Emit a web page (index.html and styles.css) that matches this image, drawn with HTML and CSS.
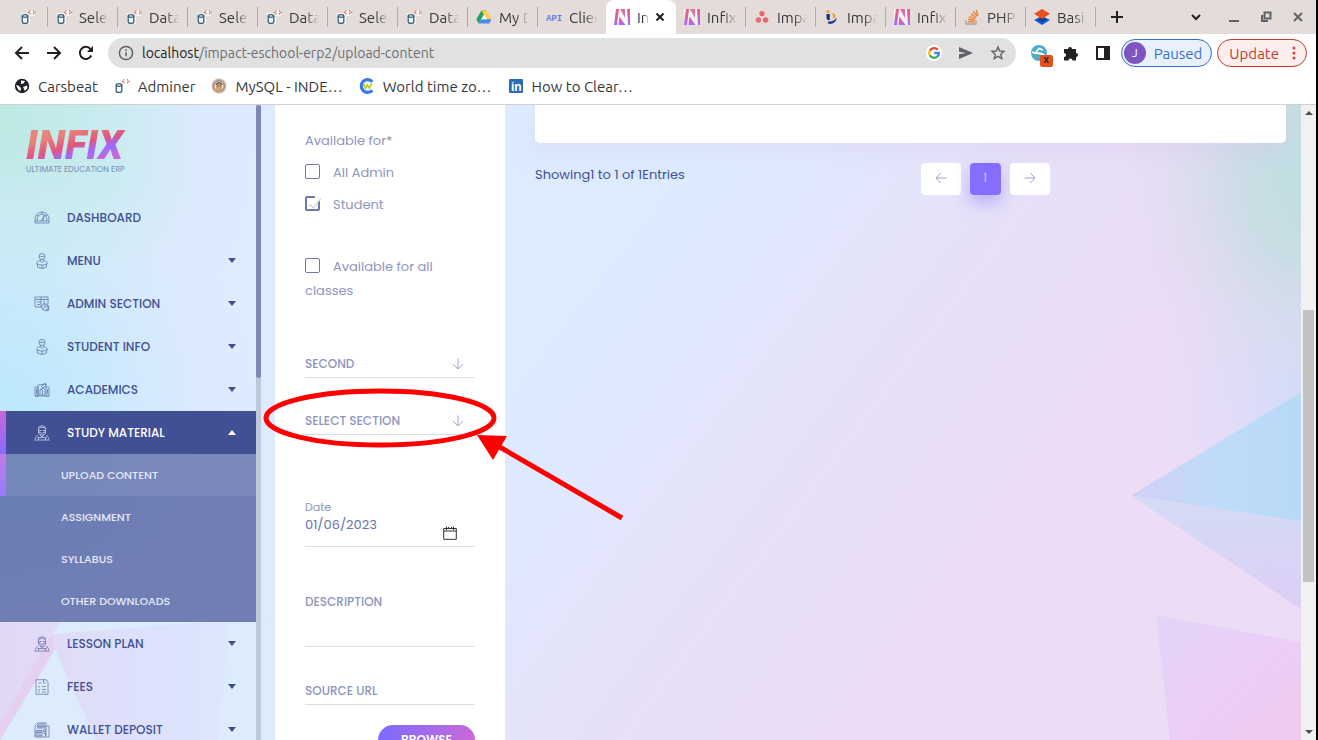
FILE: index.html
```html
<!DOCTYPE html>
<html lang="en">
<head>
<meta charset="utf-8">
<title>Infix - Upload Content</title>
<link rel="stylesheet" href="styles.css">
</head>
<body>
<svg class="defs" aria-hidden="true">
  <defs>
    <linearGradient id="infix" x1="0" y1="0" x2="0" y2="1"><stop offset="0.3" stop-color="#e2608f"/><stop offset="1" stop-color="#a46bff"/></linearGradient>
    <symbol id="i-adminer" viewBox="0 0 16 16"><path d="M1 4h7V1h7v6h-5v8H1z" fill="#fff" opacity=".7"/><g fill="none" stroke="#2f5f7d" stroke-width="1.3"><ellipse cx="5" cy="7" rx="2.800" ry="1.300"/><path d="M2.200 7v6c0 1.800 5.600 1.800 5.600 0V7"/></g><path d="M10.300 1.500L8.600 3.300l1.700 1.800M13.200 1.500L15 3.300l-1.800 1.800" fill="none" stroke="#c0543c" stroke-width="1.200" stroke-dasharray="1.300 .6"/></symbol>
    <symbol id="i-drive" viewBox="0 0 16 16"><path d="M5.500 1.500h5l-7.800 13L.3 10.300z" fill="#1fa463"/><path d="M5.500 1.500h5l5.200 8.800h-5z" fill="#ffcf48"/><path d="M5.300 10.300h10.400l-2.500 4.200H2.700z" fill="#4688f4"/><path d="M8 5.700l2.700 4.600H5.300z" fill="#fff"/></symbol>
    <symbol id="i-n" viewBox="0 0 16 16"><path d="M0 0h16v16H0z" fill="#fff" opacity=".6"/><g fill="url(#infix)"><path d="M2 0h3L3 16H0z"/><path d="M6 0h5v9z" opacity=".9"/><path d="M5.300 7.500L11.500 16H4.500z"/><path d="M13 0h3v16h-2z"/></g></symbol>
    <symbol id="i-dots" viewBox="0 0 16 16"><g fill="#e9686f"><circle cx="8" cy="4.600" r="2.700"/><circle cx="4.400" cy="11" r="2.700"/><circle cx="11.600" cy="11" r="2.700"/></g></symbol>
    <symbol id="i-b" viewBox="0 0 16 16"><circle cx="4" cy="2.600" r="1.600" fill="#f3a02a"/><path d="M2.500 5h3.300v6c-2 .5-3.300-.5-3.300-2z" fill="#1d2f7c"/><path d="M7 4c5 0 6.500 4 1 6.500 2-2.500 1.500-4.500-1-6.500z" fill="#f3a02a"/><path d="M4 12.500c3.500.5 7-1 8.500-4 .5 4.500-4.500 7.500-8.500 6z" fill="#213b92"/></symbol>
    <symbol id="i-so" viewBox="0 0 16 16"><path d="M2 11v4h10v-4" fill="none" stroke="#a7a2a0" stroke-width="1.300"/><g stroke="#ef8236" stroke-width="1.400"><path d="M4 12.800h6.500M4.200 10.300l6.500.7M5 7.600l6.200 2M6.800 4.900l5.200 3.600M9.200 2.500l3.800 4.800M12.200 1l1.600 5.800"/></g></symbol>
    <symbol id="i-layers" viewBox="0 0 16 16"><path d="M8 7l8 4-8 5-8-5z" fill="#0d5fd8"/><path d="M8 8l5 2.500L8 13l-5-2.500z" fill="#1b3b8d"/><path d="M8 0l8 4.700L8 10 0 4.700z" fill="#e9501f"/></symbol>
    <symbol id="i-globe" viewBox="0 0 16 16"><circle cx="8" cy="8" r="7.200" fill="#202124"/><path d="M2 7l2.500.8L7 10l-.5 3-2-1zM7 2.500l4 .5-1.500 2.500L7 6zM9 9l4-1.500.5 2.500-2.500 3z" fill="#fff"/></symbol>
    <symbol id="i-owl" viewBox="0 0 16 16"><circle cx="8" cy="8" r="7.500" fill="#cdb49e"/><circle cx="8" cy="8" r="5.200" fill="#efe3d5" stroke="#8a7970"/><ellipse cx="8" cy="9.500" rx="3" ry="4" fill="#d7a06a"/><path d="M5 7c1-3 5-3 6 0" fill="none" stroke="#62564f" stroke-width="1.500"/><path d="M6.500 8h.9M8.800 8h.9" stroke="#333" stroke-width="1.200"/></symbol>
    <symbol id="i-clock" viewBox="0 0 16 16"><path d="M13.300 3.800A6.300 6.300 0 1 0 13.300 12.200" fill="none" stroke="#3b78e7" stroke-width="3.200"/><path d="M4.500 6l2 4L8.300 7l2 3 2.500-4.500" fill="none" stroke="#b5d334" stroke-width="1.900"/></symbol>
    <symbol id="i-dash" viewBox="0 0 16 16"><path d="M1 13V9a7 7 0 0 1 14 0v4zM1 11h14M3.200 11V9a4.800 4.800 0 0 1 9.600 0v2M7 11l3.500-6-1.700 6M8 2v2M3 5l1.500 1M13 5l-1.500 1"/></symbol>
    <symbol id="i-person" viewBox="0 0 16 16"><circle cx="8" cy="3.500" r="3"/><path d="M5.200 3c2 .8 4 .8 5.600 0M6.500 6.300V8L8 9.500 9.500 8V6.300M6 7.700c-2.300.3-3.300 1.500-3.300 3.300L8 12.200l5.300-1.200c0-1.800-1-3-3.300-3.300M3.500 11.300V14L8 15.500l4.500-1.500v-2.700M8 12v3.500"/></symbol>
    <symbol id="i-admin" viewBox="0 0 16 16"><path d="M1 1h13v7M1 1v10h7M1 3.500h13M3 6h4M3 8.500h3M7 1v10M10 3.500V8"/><circle cx="11" cy="11" r="3.300"/><path d="M11 8v3l3-1M11 11l-2 2M14 9l1 5-3 1"/></symbol>
    <symbol id="i-acad" viewBox="0 0 16 16"><path d="M1 14V5h3v9zM4 13V3l8-1v11zM12 5h3v9h-3M1 14h14M6 12V8l3-3 2 3v4M7 5l4-4 1 2-5 5M2.500 7v5M13.500 7v5M8.500 8v5"/></symbol>
    <symbol id="i-study" viewBox="0 0 16 16"><circle cx="8" cy="4.500" r="3.800"/><path d="M4.500 3.500c2.500-1.500 5-1.500 7 0M5 5.500h2.500M8.700 5.500H11M4.500 5v3.500c2 2 5 2 7 0V5M6 10l2 2 2-2M4 10.500c-2 .5-2.500 1.500-2.500 3.500M12 10.500c2 .5 2.500 1.500 2.500 3.500M0 15h16M3.500 12.500h9M4.500 12.500V15M11.500 12.500V15"/></symbol>
    <symbol id="i-fees" viewBox="0 0 16 16"><path d="M2 .7h10L14 3v12.300H2zM4.500 4h3M4 7.500l.8.8L6 6.800M8 7.500h4M4 10.500l.8.800L6 9.800M8 10.500h4M4 13h2M8 13h4M9.500.7V4H12"/></symbol>
    <symbol id="i-wallet" viewBox="0 0 16 16"><path d="M1 15V4l3-3h8v14zM3 4h9M3 6h9M4 2v4M6 1v5M8 1v5M10 1v5M12.500 4H15v11h-2.500M2 8.500h6V14H2zM9.500 8h2v2h-2zM9.500 11.500h2V14M2 10.500h6M4 8.500V14M6 8.500V14"/></symbol>
    <symbol id="i-down" viewBox="0 0 12 12"><path d="M6 .5V11M1 6.200L6 11l5-4.800"/></symbol>
  </defs>
</svg>

<header class="browser">
  <nav class="tabs" aria-label="Open tabs">
    <div class="tab pinned"><button aria-label="Adminer"><svg><use href="#i-adminer"/></svg></button></div>
    <div class="tab"><button><svg><use href="#i-adminer"/></svg><span>Selec</span></button></div>
    <div class="tab"><button><svg><use href="#i-adminer"/></svg><span>Data</span></button></div>
    <div class="tab"><button><svg><use href="#i-adminer"/></svg><span>Selec</span></button></div>
    <div class="tab"><button><svg><use href="#i-adminer"/></svg><span>Data</span></button></div>
    <div class="tab"><button><svg><use href="#i-adminer"/></svg><span>Selec</span></button></div>
    <div class="tab"><button><svg><use href="#i-adminer"/></svg><span>Data</span></button></div>
    <div class="tab"><button><svg><use href="#i-drive"/></svg><span>My D</span></button></div>
    <div class="tab bare"><button><svg viewBox="0 0 16 16"><text class="api-mark" x="0" y="12">API</text></svg><span>Clien</span></button></div>
    <div class="tab active"><button><svg><use href="#i-n"/></svg><span>In</span></button><button class="close" aria-label="Close tab"><svg viewBox="0 0 10 10"><path d="M1.500 1.500l7 7M8.500 1.500l-7 7"/></svg></button></div>
    <div class="tab"><button><svg><use href="#i-n"/></svg><span>Infix</span></button></div>
    <div class="tab"><button><svg><use href="#i-dots"/></svg><span>Impa</span></button></div>
    <div class="tab"><button><svg><use href="#i-b"/></svg><span>Impa</span></button></div>
    <div class="tab"><button><svg><use href="#i-n"/></svg><span>Infix</span></button></div>
    <div class="tab"><button><svg><use href="#i-so"/></svg><span>PHP</span></button></div>
    <div class="tab"><button><svg><use href="#i-layers"/></svg><span>Basi</span></button></div>
    <button class="new-tab" aria-label="New tab"><svg viewBox="0 0 14 14"><path d="M7 1v12M1 7h12"/></svg></button>
    <div class="window-controls">
      <button aria-label="Search tabs"><svg viewBox="0 0 12 12"><path class="dark" d="M2 4l4 4 4-4"/></svg></button>
      <button aria-label="Minimize"><svg viewBox="0 0 12 12"><path d="M1 10h10"/></svg></button>
      <button aria-label="Restore"><svg viewBox="0 0 12 12"><path d="M4.500 1.500h6v6h-6zM2 4v6h6"/></svg></button>
      <button aria-label="Close"><svg viewBox="0 0 12 12"><path d="M2 2l8 8M10 2l-8 8"/></svg></button>
    </div>
  </nav>
  <div class="toolbar">
    <div class="nav-buttons">
      <button aria-label="Back"><svg viewBox="0 0 16 16"><path d="M15 8H2M8 2L2 8l6 6"/></svg></button>
      <button aria-label="Forward"><svg viewBox="0 0 16 16"><path d="M1 8h13M8 2l6 6-6 6"/></svg></button>
      <button aria-label="Reload"><svg viewBox="0 0 16 16"><path d="M13.300 10.500A6 6 0 1 1 12.500 4"/><path class="solid" d="M15 1v6H9z"/></svg></button>
    </div>
    <div class="address">
      <svg class="info" viewBox="0 0 16 16"><circle cx="8" cy="8" r="6.600"/><path d="M8 7.300v4M8 4.300v1.700"/></svg>
      <span class="url"><b>localhost</b>/impact-eschool-erp2/upload-content</span>
      <button aria-label="Google"><svg viewBox="0 0 16 16"><circle cx="8" cy="8" r="8" fill="#fff"/><g fill="none" stroke-width="2.300"><path d="M11.700 4.800A4.900 4.900 0 0 0 3.800 5.700" stroke="#ea4335"/><path d="M3.800 5.700a4.900 4.900 0 0 0 0 4.600" stroke="#fbbc05"/><path d="M3.800 10.300a4.900 4.900 0 0 0 7.400 1.400" stroke="#34a853"/><path d="M11.200 11.700A4.900 4.900 0 0 0 12.900 8H8.200" stroke="#4285f4"/></g></svg></button>
      <button aria-label="Share"><svg viewBox="0 0 16 16"><path d="M1 2l14 6-14 6V9.200L8 8 1 6.800z" fill="#5f6368"/></svg></button>
      <button aria-label="Bookmark"><svg viewBox="0 0 16 16"><path d="M8 2l1.700 4 4.300.4-3.200 2.900 1 4.300L8 11.300l-3.800 2.300 1-4.300L2 6.400 6.300 6z" fill="none" stroke="#5f6368" stroke-width="1.400"/></svg></button>
    </div>
    <div class="extensions">
      <button class="blocked" aria-label="Translate extension"><svg viewBox="0 0 16 16"><circle cx="8" cy="8" r="8" fill="#4eacc9"/><path d="M1 7c5 3 8-1 13 4M5 7L8 3.500 12 5" fill="none" stroke="#fff" stroke-width="1.800"/></svg><span>x</span></button>
      <button aria-label="Extensions"><svg viewBox="0 0 16 16"><path d="M1 4h4a2 2 0 1 1 4 0h4v4a2 2 0 1 1 0 4v3.500H9.500a2 2 0 1 0-4 0H1V12a2 2 0 1 0 0-4z" fill="#202124"/></svg></button>
      <button aria-label="Side panel"><svg viewBox="0 0 16 16"><path d="M1 1h14v14H1zM3 3v10h6V3z" fill="#202124" fill-rule="evenodd"/></svg></button>
    </div>
    <button class="pill paused"><span class="avatar">J</span>Paused</button>
    <button class="pill update">Update<svg viewBox="0 0 4 16"><circle cx="2" cy="3" r="1.500"/><circle cx="2" cy="8" r="1.500"/><circle cx="2" cy="13" r="1.500"/></svg></button>
  </div>
  <nav class="bookmarks" aria-label="Bookmarks">
    <a href="#"><svg><use href="#i-globe"/></svg>Carsbeat</a>
    <a href="#"><svg><use href="#i-adminer"/></svg>Adminer</a>
    <a href="#"><svg><use href="#i-owl"/></svg>MySQL - INDE…</a>
    <a href="#"><svg><use href="#i-clock"/></svg>World time zo…</a>
    <a href="#"><svg viewBox="0 0 16 16"><rect x="1" y="1" width="14" height="14" rx="1" fill="#2a6fb5"/><text class="in-mark" x="3" y="13">in</text></svg>How to Clear…</a>
  </nav>
</header>

<div class="page">
  <svg class="backdrop" viewBox="0 0 1316 636" preserveAspectRatio="none" aria-hidden="true">
    <defs>
      <linearGradient id="base" gradientUnits="userSpaceOnUse" x1="590" y1="190" x2="960" y2="470"><stop offset="0" stop-color="#dcebfe"/><stop offset=".25" stop-color="#e1e8fe"/><stop offset=".55" stop-color="#e6e1f8"/><stop offset="1" stop-color="#ecdcf6"/></linearGradient>
      <radialGradient id="teal" gradientUnits="userSpaceOnUse" cx="0" cy="0" r="1" gradientTransform="translate(1320 70) scale(200 250)"><stop offset="0" stop-color="#bbdfe1"/><stop offset=".4" stop-color="#c8dde4" stop-opacity=".9"/><stop offset="1" stop-color="#dedcee" stop-opacity="0"/></radialGradient>
      <radialGradient id="blue" gradientUnits="userSpaceOnUse" cx="0" cy="0" r="1" gradientTransform="translate(1310 290) scale(150 180)"><stop offset="0" stop-color="#cddcfb"/><stop offset="1" stop-color="#dcdcf9" stop-opacity="0"/></radialGradient>
      <radialGradient id="mint" gradientUnits="userSpaceOnUse" cx="0" cy="0" r="1" gradientTransform="translate(0 20) scale(250 300)"><stop offset="0" stop-color="#bce9e4"/><stop offset=".5" stop-color="#c6ecef" stop-opacity=".8"/><stop offset="1" stop-color="#dceafe" stop-opacity="0"/></radialGradient>
      <radialGradient id="sky" gradientUnits="userSpaceOnUse" cx="0" cy="0" r="1" gradientTransform="translate(0 300) scale(250 250)"><stop offset="0" stop-color="#bbe8fb"/><stop offset=".4" stop-color="#c4e9fc" stop-opacity=".8"/><stop offset="1" stop-color="#dceafe" stop-opacity="0"/></radialGradient>
      <linearGradient id="shard"><stop offset="0" stop-color="#d2d0f7"/><stop offset=".55" stop-color="#bedcf8"/><stop offset="1" stop-color="#b8d9f6"/></linearGradient>
      <linearGradient id="shard2" x1="0" y1="0" x2="0" y2="1"><stop offset="0" stop-color="#d4dbf7"/><stop offset="1" stop-color="#dccff4"/></linearGradient>
      <linearGradient id="rose" x1="0" y1="0" x2="1" y2="1"><stop offset="0" stop-color="#e2d5f6"/><stop offset=".5" stop-color="#ebcef6"/><stop offset="1" stop-color="#f0caef"/></linearGradient>
      <linearGradient id="wash" x1="0" y1="0" x2="1" y2="0"><stop offset="0" stop-color="#e2d8f5"/><stop offset=".6" stop-color="#dde3fd"/><stop offset="1" stop-color="#dceafd"/></linearGradient>
    </defs>
    <rect width="1316" height="636" fill="url(#base)"/>
    <rect x="1100" width="216" height="636" fill="url(#blue)"/>
    <rect x="1100" width="216" height="400" fill="url(#teal)"/>
    <path d="M1131 391L1301 288V417z" fill="url(#shard)"/>
    <path d="M1131 391l170 26v88z" fill="url(#shard2)"/>
    <path d="M1156 511l145 27v98h-131z" fill="url(#rose)"/>
    <rect width="275" height="636" fill="#deeafe"/>
    <rect width="260" height="400" fill="url(#mint)"/>
    <rect width="260" height="560" fill="url(#sky)"/>
    <path d="M0 518h275v118H0z" fill="url(#wash)"/>
    <path d="M52 530l150-12H60zM55 545L0 636h96zM230 518l-12 118h57V518z" fill="#dcecfc"/>
    <path d="M52 530l3 15L0 636v-16z" fill="#e5d0ef"/>
  </svg>

  <aside class="sidebar">
    <div class="side-content">
      <a class="logo" href="#"><strong>INFIX</strong><small>ULTIMATE EDUCATION ERP</small></a>
      <ul class="menu">
        <li><a href="#"><svg><use href="#i-dash"/></svg>DASHBOARD</a></li>
        <li><a class="has-sub" href="#"><svg><use href="#i-person"/></svg>MENU</a></li>
        <li><a class="has-sub" href="#"><svg><use href="#i-admin"/></svg>ADMIN SECTION</a></li>
        <li><a class="has-sub" href="#"><svg><use href="#i-person"/></svg>STUDENT INFO</a></li>
        <li><a class="has-sub" href="#"><svg><use href="#i-acad"/></svg>ACADEMICS</a></li>
        <li>
          <a class="has-sub open" href="#"><svg><use href="#i-study"/></svg>STUDY MATERIAL</a>
          <ul class="submenu">
            <li><a class="current" href="#">UPLOAD CONTENT</a></li>
            <li><a href="#">ASSIGNMENT</a></li>
            <li><a href="#">SYLLABUS</a></li>
            <li><a href="#">OTHER DOWNLOADS</a></li>
          </ul>
        </li>
        <li><a class="has-sub" href="#"><svg><use href="#i-study"/></svg>LESSON PLAN</a></li>
        <li><a class="has-sub" href="#"><svg><use href="#i-fees"/></svg>FEES</a></li>
        <li><a class="has-sub" href="#"><svg><use href="#i-wallet"/></svg>WALLET DEPOSIT</a></li>
      </ul>
    </div>
    <div class="side-scroll"><i></i></div>
  </aside>

  <main class="content">
    <form class="card upload-form">
      <fieldset>
        <legend>Available for*</legend>
        <label><input type="checkbox">All Admin</label>
        <label><input type="checkbox" checked>Student</label>
      </fieldset>
      <label class="all-classes"><input type="checkbox">Available for all classes</label>
      <div class="select"><select aria-label="Class"><option>SECOND</option></select><svg><use href="#i-down"/></svg></div>
      <div class="select"><select aria-label="Section"><option>SELECT SECTION</option></select><svg><use href="#i-down"/></svg></div>
      <div class="date">
        <div class="date-field"><label for="date">Date</label><input id="date" type="text" value="01/06/2023"></div>
        <button type="button" aria-label="Open calendar"><svg viewBox="0 0 14 14"><path d="M.7 2.500h12.600v10.800H.7zM.7 5h12.600M3.500.5v3.500M10.500.5v3.500M5.500 1v2M8.500 1v2"/></svg></button>
      </div>
      <textarea class="description" aria-label="Description" placeholder="DESCRIPTION"></textarea>
      <input class="source" type="text" aria-label="Source URL" placeholder="SOURCE URL">
      <button class="browse" type="button">BROWSE</button>
    </form>
    <section class="listing">
      <div class="card table-card"></div>
      <div class="table-footer">
        <p>Showing1 to 1 of 1Entries</p>
        <nav class="pager" aria-label="Pages">
          <button aria-label="Previous"><svg class="left"><use href="#i-down"/></svg></button>
          <button class="on">1</button>
          <button aria-label="Next"><svg class="right"><use href="#i-down"/></svg></button>
        </nav>
      </div>
    </section>
  </main>

  <div class="page-scroll"><i class="up"></i><i class="thumb"></i><i class="down"></i></div>

  <svg class="annotation" viewBox="0 0 362 136" aria-hidden="true"><ellipse cx="118" cy="31" rx="114" ry="27" fill="none" stroke="#f00" stroke-width="5"/><path d="M236 59l124 72" stroke="#f00" stroke-width="5"/><path d="M215 48l30 1-14 24z" fill="#f00"/></svg>
</div>
</body>
</html>
```

FILE: styles.css
```css
* { box-sizing: border-box; }

body {
  margin: 0;
  height: 100vh;
  display: flex;
  flex-direction: column;
  overflow: hidden;
  border-right: 2px solid #000;
  font-family: "Poppins", "Inter", sans-serif;
  font-size: 13px;
  color: #415094;
}

button { border: 0; padding: 0; background: none; font: inherit; color: inherit; }
a { color: inherit; text-decoration: none; }
ul { list-style: none; margin: 0; padding: 0; }
svg { display: block; flex: none; width: 16px; height: 16px; }
.defs { position: absolute; width: 0; height: 0; }

/* Browser frame */
.browser {
  background: #fff;
  border-bottom: 1px solid #cfd0d3;
  font-family: "Ubuntu", "Noto Sans", sans-serif;
  font-size: 15px;
  color: #35363a;
}

.tabs { display: flex; align-items: center; height: 34px; background: #e4dcd8; }
.tab {
  display: flex;
  align-items: center;
  flex: 0 1 70px;
  min-width: 0;
  height: 20px;
  padding: 0 8px;
  border-right: 1px solid #b0a9a7;
}
.tab.pinned { flex-basis: 48px; padding-left: 20px; }
.tab.bare { flex-basis: 68px; border-color: transparent; }
.tab button { display: flex; align-items: center; gap: 7px; min-width: 0; flex: 1; }
.tab span {
  flex: 1;
  overflow: hidden;
  white-space: nowrap;
  text-align: left;
  -webkit-mask-image: linear-gradient(90deg, #000 55%, transparent);
  mask-image: linear-gradient(90deg, #000 55%, transparent);
}
.tab.active {
  height: 34px;
  padding-right: 11px;
  background: #fff;
  border: 0;
  border-radius: 8px 8px 0 0;
}
.tab .close { flex: none; margin-left: 6px; }
.close svg { width: 10px; height: 10px; stroke: #202124; stroke-width: 2; }
.api-mark { font: bold 9px "Liberation Mono", monospace; fill: #5a86e8; }
.in-mark { font: bold 12px "Liberation Sans", sans-serif; fill: #fff; }
.new-tab { margin-left: 14px; }
.new-tab svg { width: 14px; height: 14px; stroke: #202124; stroke-width: 2; }
.window-controls { display: flex; gap: 20px; margin-left: auto; padding-right: 12px; }
.window-controls svg { width: 12px; height: 12px; fill: none; stroke: #5f6368; stroke-width: 2; }
.window-controls .dark { stroke: #202124; }
.window-controls button:first-child { margin-right: 6px; }

.toolbar { display: flex; align-items: center; height: 38px; padding: 0 9px 0 14px; }
.nav-buttons { display: flex; gap: 16px; margin-right: 14px; }
.nav-buttons svg { fill: none; stroke: #202124; stroke-width: 2; }
.nav-buttons .solid { fill: #202124; stroke: none; }
.address {
  display: flex;
  align-items: center;
  gap: 16px;
  flex: 1;
  height: 30px;
  padding: 0 10px;
  border-radius: 15px;
  background: #e1e1e1;
}
.address .info { margin-right: -8px; fill: none; stroke: #5f6368; stroke-width: 1.5; }
.url { flex: 1; font-size: 14px; color: #6b6e72; }
.url b { font-weight: 400; color: #202124; }
.extensions { display: flex; gap: 16px; margin: 0 10px 0 15px; }
.blocked { position: relative; }
.blocked span {
  position: absolute;
  left: 9px;
  top: 10px;
  width: 13px;
  height: 12px;
  border-radius: 2px;
  background: #e2501c;
  color: #202124;
  font-size: 10px;
  font-weight: 700;
  line-height: 10px;
}
.pill { display: flex; align-items: center; height: 28px; border: 1px solid; border-radius: 14px; }
.paused { gap: 8px; padding: 0 9px 0 2px; margin-right: 5px; background: #e8f0fc; color: #3570ca; }
.avatar { width: 22px; height: 22px; border-radius: 50%; background: #7e55c0; color: #fff; font-size: 12px; line-height: 22px; }
.update { gap: 13px; padding: 0 10px 0 11px; background: #fceeec; color: #c03b31; }
.update svg { width: 4px; height: 16px; fill: #c5473d; }

.bookmarks { display: flex; gap: 16px; height: 32px; padding: 0 14px 4px; }
.bookmarks a { display: flex; align-items: center; gap: 8px; }

/* Page */
.page { position: relative; display: flex; flex: 1; min-height: 0; overflow: hidden; }
.backdrop { position: absolute; z-index: -1; width: 100%; height: 100%; }

.sidebar { display: flex; flex: none; width: 261px; }
.side-content { flex: 1; overflow: hidden; font-size: 12px; font-weight: 500; }
.logo { display: block; height: 91px; padding: 21px 0 0 26px; }
.logo strong {
  display: block;
  width: 104px;
  font: italic 900 40px/40px "Roboto", sans-serif;
  background: linear-gradient(165deg, #e8857a 25%, #e2557f 48%, #9b6bff 62%, #c868d8 78%);
  -webkit-background-clip: text;
  background-clip: text;
  color: transparent;
}
.logo small { display: block; font-size: 8px; font-weight: 400; line-height: 8px; color: #7b8db5; }

.menu a { display: flex; align-items: center; height: 43px; padding: 0 20px 0 34px; gap: 17px; }
.menu svg { fill: none; stroke: currentColor; stroke-width: .8; opacity: .75; }
.has-sub::after {
  content: "";
  margin-left: auto;
  border: 4px solid transparent;
  border-top: 5px solid #415094;
  border-bottom: 0;
}
.menu .open { position: relative; background: #415094; color: #fff; }
.menu .open::after { border-top: 0; border-bottom: 5px solid #fff; }
.open::before, .current::before {
  content: "";
  position: absolute;
  inset: 0 auto 0 0;
  width: 6px;
  background: linear-gradient(#c766d8, #8a6cff);
}
.submenu { background: rgba(65, 80, 148, .7); }
.submenu a { position: relative; height: 42px; padding-left: 61px; font-size: 11px; color: #e7e9f8; }
.submenu .current { background: rgba(255, 255, 255, .08); }
.submenu .current::before { background: linear-gradient(#c07be6, #987bff); }
.side-scroll { width: 5px; background: #bdc8d8; }
.side-scroll i { display: block; height: 43%; border-radius: 3px; background: #7e87b2; }

.content { display: flex; gap: 30px; flex: 1; min-width: 0; padding: 0 15px 0 14px; }
.card { background: #fff; }
.upload-form {
  display: flex;
  flex-direction: column;
  flex: none;
  width: 230px;
  padding: 24px 30px 0;
  overflow: hidden;
  color: #8e95bc;
  line-height: 24px;
}
.upload-form > * { flex: none; }
fieldset { display: flex; flex-direction: column; gap: 8px; margin: 0; padding: 0; border: 0; }
legend { padding: 0; margin-bottom: 8px; }
input[type="checkbox"] {
  appearance: none;
  position: relative;
  width: 15px;
  height: 15px;
  margin: 0 13px 0 0;
  border: 1px solid #6e78ab;
  border-radius: 2px;
  vertical-align: -2px;
}
input[type="checkbox"]:checked { border-width: 2px; }
input[type="checkbox"]:checked::before {
  content: "";
  position: absolute;
  right: -2px;
  top: -2px;
  width: 5px;
  height: 5px;
  background: #fff;
}
input[type="checkbox"]:checked::after {
  content: "";
  position: absolute;
  left: 5px;
  top: -2px;
  width: 5px;
  height: 11px;
  border: solid #c3c7de;
  border-width: 0 1px 1px 0;
  transform: rotate(38deg);
}
.all-classes { margin: 38px 0 47px; }

input[type="text"], textarea, select {
  display: block;
  width: 100%;
  padding: 0;
  border: 0;
  border-bottom: 1px solid #dcdce9;
  border-radius: 0;
  outline: 0;
  background: transparent;
  color: #8e95bc;
  font: 500 12px/24px "Poppins", "Inter", sans-serif;
}
::placeholder { color: #8e95bc; opacity: 1; }
.select { display: grid; align-items: center; margin-bottom: 29px; }
.select > * { grid-area: 1 / 1; }
select { appearance: none; height: 28px; }
.select svg { justify-self: end; width: 12px; height: 12px; margin-right: 11px; pointer-events: none; }
.select svg, .pager svg { fill: none; stroke: #9fa5c6; stroke-width: 1; }
.date {
  display: flex;
  justify-content: space-between;
  align-items: center;
  height: 48px;
  margin-top: 35px;
  border-bottom: 1px solid #dcdce9;
}
.date-field { flex: 1; align-self: flex-start; }
.date label { display: block; font-size: 11px; line-height: 16px; }
.date input[type="text"] { border: 0; line-height: 20px; font-size: 13px; font-weight: 400; color: #6a73a9; }
.date button { padding: 20px 18px 0 0; }
.date svg { width: 14px; height: 14px; fill: none; stroke: #333; stroke-width: 1; }
.description { height: 57px; margin-top: 43px; resize: none; overflow: hidden; }
.upload-form .source { height: 28px; margin-top: 30px; }
.browse {
  align-self: flex-end;
  width: 97px;
  height: 30px;
  margin-top: 20px;
  border-radius: 15px;
  background: linear-gradient(90deg, #7c6bff, #c969d8);
  color: #fff;
  font-size: 12px;
  font-weight: 600;
}

.listing { flex: 1; min-width: 0; }
.table-card { height: 38px; border-radius: 0 0 5px 5px; box-shadow: 0 10px 20px rgba(216, 190, 235, .25); }
.table-footer { display: grid; grid-template-columns: 1fr 1fr; margin-top: 20px; }
.table-footer p { margin: 0; line-height: 24px; }
.pager { display: flex; gap: 9px; padding-left: 10px; }
.pager button { display: grid; place-items: center; width: 40px; height: 32px; padding-bottom: 3px; border-radius: 4px; background: #fff; }
.pager .on { width: 31px; background: #866cff; color: #e8ddff; font-size: 12px; font-weight: 300; box-shadow: 0 8px 16px rgba(124, 100, 255, .4); }
.pager svg { width: 12px; height: 12px; }
.left { transform: rotate(90deg); }
.right { transform: rotate(-90deg); }

.page-scroll { display: flex; flex-direction: column; align-items: center; flex: none; width: 15px; padding: 6px 0; background: #f1f1f1; }
.up, .down { border: 4px solid transparent; }
.up { border-top: 0; border-bottom: 4px solid #505050; }
.down { margin-top: auto; border-bottom: 0; border-top: 4px solid #505050; }
.thumb { width: 11px; height: 272px; margin-top: 195px; background: #c1c1c1; }

/* Marker drawn over the form */
.annotation { position: absolute; left: 262px; top: 282px; width: 362px; height: 136px; pointer-events: none; }
```
